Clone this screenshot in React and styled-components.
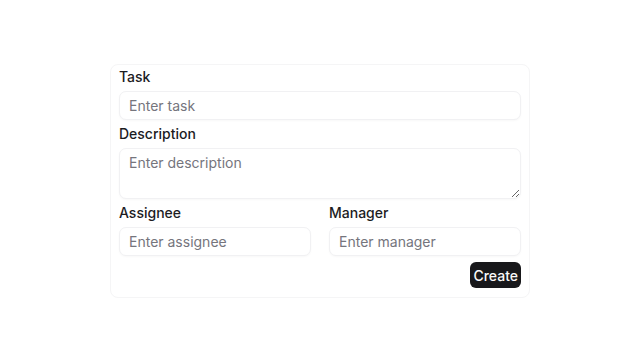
import styled, { createGlobalStyle } from 'styled-components';

const GlobalStyle = createGlobalStyle`
  body {
    margin: 0;
    background: #fff;
    font-family: Inter, "Noto Sans", sans-serif;
    color: #18181b;
  }
  * { box-sizing: border-box; }
`;

const Page = styled.div`
  width: 640px;
  height: 357px;
  display: flex;
  justify-content: center;
  padding-top: 64px;
`;

const Card = styled.form`
  width: 420px;
  height: 234px;
  padding: 2px 8px 8px;
  border: 1px solid #f5f5f6;
  border-radius: 8px;
  display: flex;
  flex-direction: column;
  gap: 4px;
`;

const Label = styled.label`
  display: block;
  font-size: 14px;
  font-weight: 500;
  line-height: 20px;
  color: #1c1c1f;
`;

const Field = styled.div`
  display: flex;
  flex-direction: column;
  gap: 4px;
`;

const Row = styled.div`
  display: grid;
  grid-template-columns: 1fr 1fr;
  gap: 18px;
`;

const Input = styled.input`
  height: 29px;
  width: 100%;
  padding: 0 9px;
  border: 1px solid #f1f1f3;
  border-radius: 7px;
  box-shadow: 0 1px 2px rgba(0, 0, 0, 0.03);
  font: 400 14px Inter, "Noto Sans", sans-serif;
  color: #18181b;
  background: #fff;
  outline: none;

  &::placeholder { color: #75757d; }
`;

const TextArea = styled.textarea`
  height: 51px;
  width: 100%;
  padding: 4px 9px;
  border: 1px solid #f1f1f3;
  border-radius: 7px;
  box-shadow: 0 1px 2px rgba(0, 0, 0, 0.03);
  font: 400 14px/20px Inter, "Noto Sans", sans-serif;
  color: #18181b;
  background: #fff;
  outline: none;
  resize: vertical;

  &::placeholder { color: #75757d; }
`;

const Actions = styled.div`
  display: flex;
  justify-content: flex-end;
  padding-top: 2px;
`;

const Button = styled.button`
  height: 26px;
  padding: 0 3px;
  border: none;
  border-radius: 6px;
  background: #18181b;
  color: #fafafa;
  font: 500 14px Inter, "Noto Sans", sans-serif;
  cursor: pointer;
`;

const App = () => {
  return (
    <>
      <GlobalStyle/>
      <Page>
        <Card onSubmit={e => e.preventDefault()}>
          <Field>
            <Label>Task</Label>
            <Input placeholder="Enter task"/>
          </Field>
          <Field>
            <Label>Description</Label>
            <TextArea placeholder="Enter description"/>
          </Field>
          <Row>
            <Field>
              <Label>Assignee</Label>
              <Input placeholder="Enter assignee"/>
            </Field>
            <Field>
              <Label>Manager</Label>
              <Input placeholder="Enter manager"/>
            </Field>
          </Row>
          <Actions>
            <Button type="submit">Create</Button>
          </Actions>
        </Card>
      </Page>
    </>
  );
};

export default App;
